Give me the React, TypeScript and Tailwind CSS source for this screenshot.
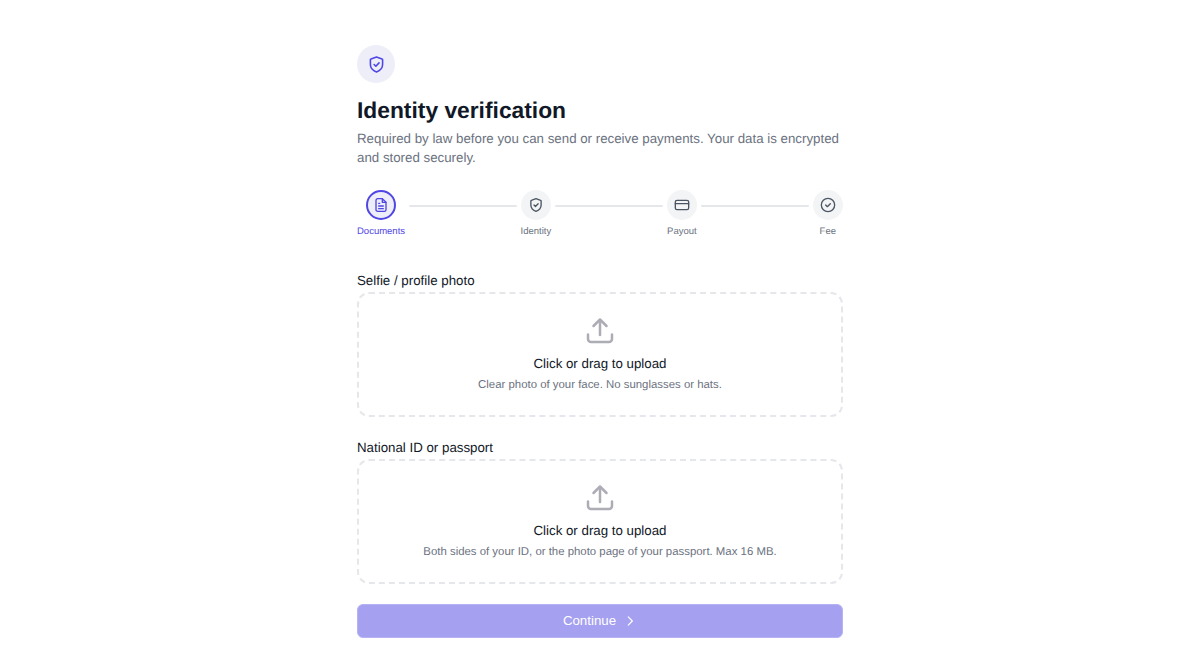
import React from 'react'

function ShieldIcon({ className }: { className: string }) {
  return (
    <svg viewBox="0 0 24 24" fill="none" stroke="currentColor" strokeWidth="2" strokeLinecap="round" strokeLinejoin="round" className={className}>
      <path d="M12 2.500 5 5a1 1 0 0 0-.7 1V12c0 4.600 3.200 7.800 7.700 9.500 4.500-1.700 7.700-4.900 7.700-9.500V6a1 1 0 0 0-.7-1L12 2.500Z" />
      <path d="m9 12 2.200 2.200L15.200 10" />
    </svg>
  )
}

function DocIcon({ className }: { className: string }) {
  return (
    <svg viewBox="0 0 24 24" fill="none" stroke="currentColor" strokeWidth="2" strokeLinecap="round" strokeLinejoin="round" className={className}>
      <path d="M14 2.500H7a2.500 2.500 0 0 0-2.500 2.500v14A2.500 2.500 0 0 0 7 21.500h10a2.500 2.500 0 0 0 2.500-2.500V8L14 2.500Z" />
      <path d="M14 2.500V8h5.500" />
      <path d="M8.500 9.500h1.500M8.500 13.500h7M8.500 17.500h7" />
    </svg>
  )
}

function CardIcon({ className }: { className: string }) {
  return (
    <svg viewBox="0 0 24 24" fill="none" stroke="currentColor" strokeWidth="2" strokeLinecap="round" strokeLinejoin="round" className={className}>
      <rect x="2" y="5" width="20" height="14" rx="2.500" />
      <path d="M2 10h20" />
    </svg>
  )
}

function CheckCircleIcon({ className }: { className: string }) {
  return (
    <svg viewBox="0 0 24 24" fill="none" stroke="currentColor" strokeWidth="2" strokeLinecap="round" strokeLinejoin="round" className={className}>
      <circle cx="12" cy="12" r="10" />
      <path d="m8.500 12 2.500 2.500 4.500-4.500" />
    </svg>
  )
}

function UploadIcon() {
  return (
    <svg viewBox="0 0 28 28" fill="none" stroke="currentColor" strokeWidth="2.500" strokeLinecap="round" strokeLinejoin="round" className="w-[28px] h-[28px] text-[#adadb6]">
      <path d="M14 18V3" />
      <path d="M7.500 9 14 2.500 20.500 9" />
      <path d="M2 17.500v4.500A3 3 0 0 0 5 25h18a3 3 0 0 0 3-3v-4.500" />
    </svg>
  )
}

function Step({ label, active, children }: { label: string; active?: boolean; children: React.ReactNode }) {
  return (
    <div className="flex flex-col items-center shrink-0">
      <div className={active
        ? 'w-[30.400px] h-[30.400px] rounded-full flex items-center justify-center bg-[#eeeef8] border-2 border-[#4f46e5] text-[#4f46e5]'
        : 'w-[30.400px] h-[30.400px] rounded-full flex items-center justify-center bg-[#f3f4f6] text-[#4b5563]'}>
        {children}
      </div>
      <span className={active ? 'mt-[5.500px] text-[9.500px] leading-[14px] text-[#4f46e5] whitespace-nowrap' : 'mt-[5.500px] text-[9.500px] leading-[14px] text-[#6b7280] whitespace-nowrap'}>{label}</span>
    </div>
  )
}

function Line() {
  return <div className="flex-1 h-[2px] bg-[#e5e7eb] rounded-full mt-[15px] mx-[4px]" />
}

function UploadBox({ label, hint }: { label: string; hint: string }) {
  return (
    <div>
      <div className="text-[13.300px] leading-[18px] text-[#111827] mb-[2px]">{label}</div>
      <div className="h-[125px] rounded-[12px] border-2 border-dashed border-[#e5e7eb] flex flex-col items-center pt-[23px]">
        <UploadIcon />
        <div className="mt-[10px] text-[13.300px] leading-[18px] text-[#111827]">Click or drag to upload</div>
        <div className="mt-[4px] text-[11.400px] leading-[16px] text-[#6b7280]">{hint}</div>
      </div>
    </div>
  )
}

export default function App() {
  return (
    <div className="min-h-screen bg-white font-['Liberation_Sans',Arial,sans-serif] [text-rendering:geometricPrecision]">
      <div className="w-[486px] mx-auto pt-[45px]">
        <div className="w-[38px] h-[38px] rounded-full bg-[#eeeef8] flex items-center justify-center">
          <ShieldIcon className="w-[19px] h-[19px] text-[#4f46e5]" />
        </div>
        <h1 className="mt-[12px] text-[22.800px] leading-[30px] font-bold text-[#111827]">Identity verification</h1>
        <p className="mt-[4px] text-[13.300px] leading-[19px] text-[#6b7280]">
          Required by law before you can send or receive payments. Your data is encrypted and stored securely.
        </p>

        <div className="mt-[22.500px] flex items-start">
          <Step label="Documents" active><DocIcon className="w-[16px] h-[16px]" /></Step>
          <Line />
          <Step label="Identity"><ShieldIcon className="w-[16px] h-[16px]" /></Step>
          <Line />
          <Step label="Payout"><CardIcon className="w-[16px] h-[16px]" /></Step>
          <Line />
          <Step label="Fee"><CheckCircleIcon className="w-[16px] h-[16px]" /></Step>
        </div>

        <div className="mt-[33px] flex flex-col gap-[22px]">
          <UploadBox label="Selfie / profile photo" hint="Clear photo of your face. No sunglasses or hats." />
          <UploadBox label="National ID or passport" hint="Both sides of your ID, or the photo page of your passport. Max 16 MB." />
        </div>

        <button className="mt-[19.500px] w-full h-[34.500px] rounded-[6px] border border-[#b6b2f3] bg-[#a5a0f0] text-white text-[13.300px] flex items-center justify-center gap-[7px]">
          Continue
          <svg viewBox="0 0 24 24" fill="none" stroke="currentColor" strokeWidth="2" strokeLinecap="round" strokeLinejoin="round" className="w-[14px] h-[14px]">
            <path d="m9 5 7 7-7 7" />
          </svg>
        </button>
      </div>
    </div>
  )
}
